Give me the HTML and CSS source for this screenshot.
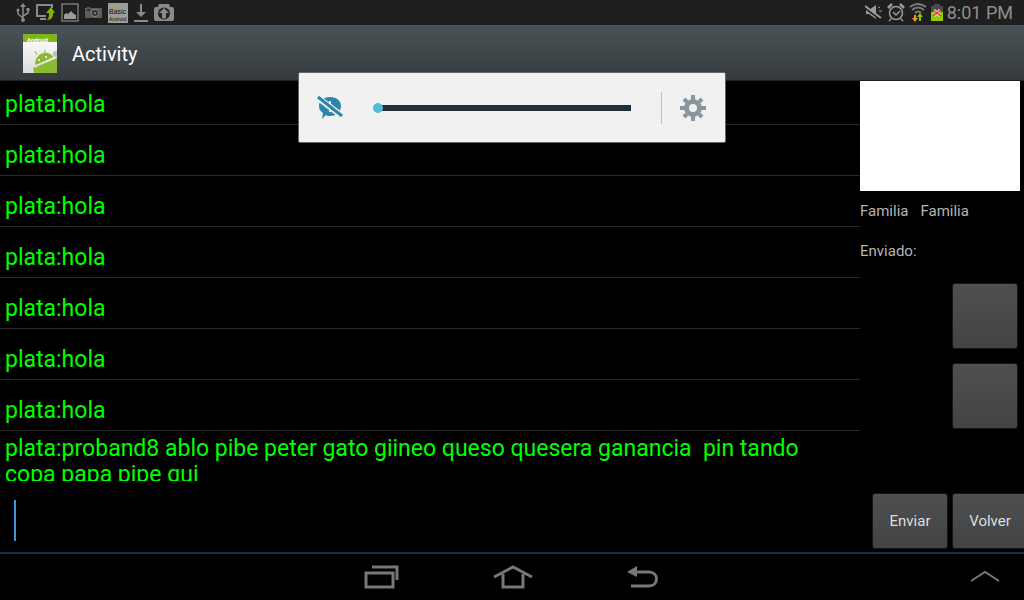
FILE: index.html
```html
<!DOCTYPE html>
<html lang="es">
  <head>
    <meta charset="UTF-8" />
    <meta name="viewport" content="width=device-width, initial-scale=1.0" />
    <title>Activity</title>
    <link rel="stylesheet" href="styles.css" />
  </head>
  <body>
    <!-- Barra de estado -->
    <div class="status-bar">
      <div class="status-icons">
        <svg width="14" height="20" viewBox="0 0 14 20" fill="none" stroke="#8a8a8a" stroke-width="1.5">
          <path d="M7 3v14M2 8v3l5 4M12 7v3l-5 3" />
          <path d="M7 0l3 4H4z" fill="#8a8a8a" stroke="none" />
          <circle cx="7" cy="17" r="2" fill="#8a8a8a" stroke="none" />
          <circle cx="2" cy="7" r="1.5" fill="#8a8a8a" stroke="none" />
          <path d="M10.5 5h3v3h-3z" fill="#8a8a8a" stroke="none" />
        </svg>
        <svg width="19" height="20" viewBox="0 0 19 20" fill="none">
          <path d="M16 5V2H1v11h9" stroke="#8a8a8a" stroke-width="2" />
          <path d="M4 16h6" stroke="#8a8a8a" stroke-width="2" />
          <path d="M15 4l4 6h-2c0 5-2 7-6 7 2-2 2-4 2-7h-3z" fill="#84b010" />
        </svg>
        <svg width="18" height="20" viewBox="0 0 18 20">
          <path d="M1 1h16v17H1z" fill="none" stroke="#777" stroke-width="1.5" />
          <path d="M3 16v-4l2-2 2 1 3-3 3 3 2 1v4z" fill="#9a9a9a" />
        </svg>
        <svg width="17" height="20" viewBox="0 0 17 20">
          <path d="M0 5h17v10H0zM2 4h3v1H2z" fill="#5c5c5c" />
          <circle cx="10" cy="10" r="3.5" fill="#222" stroke="#8d8d8d" />
          <circle cx="10" cy="10" r="1.5" fill="#777" />
          <path d="M2 6h3v2H2z" fill="#333" />
        </svg>
        <svg width="20" height="20" viewBox="0 0 20 20">
          <path d="M0 0h20v20H0z" fill="#9c9c9c" />
          <path d="M5 0v5h7M5 12v7" fill="none" stroke="#8bac4e" />
          <text class="b4a-text" x="1" y="11" font-size="7">Basic</text>
          <text class="b4a-text" x="1" y="18" font-size="5">Android</text>
        </svg>
        <svg width="14" height="20" viewBox="0 0 14 20" fill="#8a8a8a">
          <path d="M6 1h2v8h4l-5 5-5-5h4zM0 17h14v2H0z" />
        </svg>
        <svg width="20" height="20" viewBox="0 0 20 20" fill="#8a8a8a">
          <path d="M5 1h10l1 3h2q2 0 2 2v10q0 2-2 2H2q-2 0-2-2V6q0-2 2-2h2z" />
          <circle cx="10" cy="10.5" r="6" fill="#222" />
          <path d="M10 5l5 5h-3v5q-2 1-4 0v-5H5z" />
        </svg>
      </div>
      <div class="status-icons status-right">
        <svg width="18" height="20" viewBox="0 0 18 20">
          <path d="M1 7h3l7-5v14l-7-5H1z" fill="#9a9a9a" />
          <path d="M0 5l16 12" stroke="#1f1f1f" stroke-width="2" />
          <path d="M0 3l16 12" stroke="#9a9a9a" stroke-width="2" />
          <path d="M13 5l2-1M14 8h3" stroke="#9a9a9a" />
        </svg>
        <svg width="18" height="20" viewBox="0 0 18 20" fill="none" stroke="#9a9a9a" stroke-width="1.5">
          <circle cx="9" cy="10" r="6.5" />
          <path d="M6 9l3 3 4-4M4 16l-2 2M14 16l2 2" />
          <path d="M1 5l4-4M17 5l-4-4" stroke-width="2.5" />
        </svg>
        <svg width="18" height="20" viewBox="0 0 18 20" fill="none">
          <path d="M1 4q8-6 16 0M3 7q6-5 12 0M6 10q3-3 6 0" stroke="#7a7a7a" stroke-width="2" />
          <path d="M5 12h2v3h2l-3 4-3-4h2z" fill="#f59331" />
          <path d="M10 18h2v-4h2l-3-4-3 4h2z" fill="#86c50b" />
        </svg>
        <svg width="12" height="20" viewBox="0 0 12 20">
          <path d="M3 1h6v2h3v6H0V3h3z" fill="#4a4a4a" />
          <path d="M0 9h12v9H0z" fill="#8fce00" />
          <path d="M3 7l6 6M9 7l-6 6" stroke="#ddd" stroke-width="3" />
          <path d="M2 7l8 6M10 7l-8 6" stroke="#e33a1c" stroke-width="1.5" />
        </svg>
        <time class="clock">8:01 PM</time>
      </div>
    </div>

    <header class="action-bar">
      <svg width="34" height="40" viewBox="0 0 34 40">
        <defs>
          <linearGradient id="hoja" x1="0" y1="0" x2="0" y2="1">
            <stop offset="0" stop-color="#fff" />
            <stop offset="1" stop-color="#dcdcdc" />
          </linearGradient>
          <clipPath id="borde"><path d="M0 0h34v39H0z" /></clipPath>
        </defs>
        <path d="M0 2q0-2 2-2h30q2 0 2 2v37H0z" fill="url(#hoja)" />
        <path d="M0 2q0-2 2-2h30q2 0 2 2v6H0z" fill="#7eb51c" />
        <text class="logo-text" x="4" y="8" font-size="6">Android</text>
        <g clip-path="url(#borde)">
          <circle cx="33" cy="20" r="3" fill="#bdbdbd" />
          <path d="M12.5 31c-1-6 3-11 8-12 4-1 8 1 10 4zM13 33l21-9v15H15z" fill="#8cb834" />
          <path d="M10 34q2-2 4 1l1 4h-4z" fill="#8cb834" />
          <path d="M14 21l-2-4M22 19v-3" stroke="#8cb834" />
          <circle cx="16" cy="26" r="1" fill="#fff" />
          <circle cx="23" cy="23" r="1" fill="#fff" />
        </g>
      </svg>
      <h1>Activity</h1>
    </header>

    <main>
      <ul class="messages">
        <li>plata:hola</li>
        <li>plata:hola</li>
        <li>plata:hola</li>
        <li>plata:hola</li>
        <li>plata:hola</li>
        <li>plata:hola</li>
        <li>plata:hola</li>
        <li class="long">plata:proband8 ablo pibe peter gato giineo queso quesera ganancia&nbsp; pin tando<br />copa papa pipe qui</li>
      </ul>
      <aside class="side">
        <div class="photo"></div>
        <p class="names"><span>Familia</span><span>Familia</span></p>
        <p>Enviado:</p>
        <div class="actions">
          <button class="btn square" type="button" aria-label="Acción 1"></button>
          <button class="btn square" type="button" aria-label="Acción 2"></button>
        </div>
      </aside>
    </main>

    <form class="composer">
      <span class="caret"></span>
      <input type="text" aria-label="Mensaje" />
      <button class="btn" type="button">Enviar</button>
      <button class="btn" type="button">Volver</button>
    </form>

    <!-- Barra de navegación -->
    <nav class="nav-bar">
      <div class="nav-main">
        <button type="button" aria-label="Recientes">
          <svg width="40" height="26" viewBox="0 0 40 26" fill="none" stroke="#777" stroke-width="3">
            <path d="M3 9h27v14H3zM9 3h25v13" />
          </svg>
        </button>
        <button type="button" aria-label="Inicio">
          <svg width="40" height="26" viewBox="0 0 40 26" fill="none" stroke="#777" stroke-width="3">
            <path d="M1 13L20 3l19 10M10 10v13h20V10" />
          </svg>
        </button>
        <button type="button" aria-label="Atrás">
          <svg width="40" height="26" viewBox="0 0 40 26" fill="none" stroke="#777" stroke-width="3">
            <path d="M14 8h12c10 0 10 14 0 14H8" />
            <path d="M4 8l10-6v11z" fill="#777" stroke="none" />
          </svg>
        </button>
      </div>
      <button type="button" aria-label="Mostrar">
        <svg width="30" height="14" viewBox="0 0 30 14" fill="none" stroke="#777" stroke-width="2">
          <path d="M1 11l14-9 14 9" />
        </svg>
      </button>
    </nav>

    <!-- Panel de volumen -->
    <div class="volume">
      <svg width="26" height="26" viewBox="0 0 26 26">
        <path d="M13 2c7 0 11 4 11 9s-4 10-11 10c-2 0-3 0-4-1l-4 4 1-6c-3-2-4-4-4-7 0-5 4-9 11-9z" fill="#2c86ab" />
        <path d="M12 6h2v6h-2zM12 14h2v3h-2z" fill="#f1f1f1" />
        <path d="M0 2l25 19" stroke="#f1f1f1" stroke-width="6" />
        <path d="M1 2l24 19" stroke="#2c86ab" stroke-width="3" />
      </svg>
      <input type="range" min="0" max="15" value="0" aria-label="Volumen" />
      <button type="button" aria-label="Ajustes">
        <svg width="26" height="26" viewBox="0 0 26 26" fill="none" stroke="#8b959c">
          <circle cx="13" cy="13" r="6.5" stroke-width="5" />
          <path d="M13 0v5M13 21v5M0 13h5M21 13h5M4 4l3 3M19 19l3 3M22 4l-3 3M7 19l-3 3" stroke-width="4" />
        </svg>
      </button>
    </div>
  </body>
</html>
```
FILE: styles.css
```css
:root {
  --verde: #00ff00;
  --gris: #b5b5b5;
  --panel: #f1f1f1;
}

* {
  margin: 0;
  padding: 0;
  box-sizing: border-box;
}

body {
  position: relative;
  display: flex;
  flex-direction: column;
  height: 100vh;
  overflow: hidden;
  background-color: #000;
  color: var(--gris);
  font-family: Roboto, sans-serif;
  font-size: 15px;
}

svg {
  display: block;
  flex-shrink: 0;
}

button {
  border: none;
  background: none;
  font-family: inherit;
}

/* Barra de estado */
.status-bar {
  display: flex;
  justify-content: space-between;
  align-items: center;
  height: 25px;
  padding: 0 11px 0 16px;
  background-color: #1f1f1f;
}

.status-icons {
  display: flex;
  align-items: center;
  gap: 6px;
}

.status-right {
  gap: 4px;
}

.clock {
  color: #8f8f8f;
  font-size: 18px;
  line-height: 24px;
}

.b4a-text {
  fill: #111;
  font-family: "Liberation Sans", sans-serif;
}

/* Cabecera */
.action-bar {
  display: flex;
  align-items: center;
  gap: 15px;
  height: 56px;
  padding: 2px 0 0 23px;
  background: linear-gradient(#4a5356, #353a3e);
  border-bottom: 1px solid #1d2022;
}

.action-bar h1 {
  color: #fff;
  font-size: 20px;
  font-weight: 400;
}

.logo-text {
  fill: #fff;
  font-weight: 700;
}

/* Lista de mensajes */
main {
  display: flex;
  flex: 1;
  min-height: 0;
}

.messages {
  flex: 1;
  overflow: hidden;
  list-style: none;
  color: var(--verde);
  font-size: 23px;
  line-height: 26px;
}

.messages li {
  padding: 18px 5px 6px;
  border-bottom: 1px solid #2a2a2a;
}

.messages li:first-child {
  padding-top: 11px;
}

.messages .long {
  padding: 5px 5px 0;
}

.side {
  width: 164px;
  line-height: 20px;
}

.side p {
  margin-bottom: 20px;
}

.photo {
  height: 110px;
  margin: 0 4px 10px 0;
  background-color: #fff;
}

.names {
  display: flex;
  gap: 12px;
}

.actions {
  display: flex;
  flex-direction: column;
  align-items: flex-end;
  gap: 16px;
  padding: 3px 7px 0 0;
}

.btn {
  flex-shrink: 0;
  width: 74px;
  height: 54px;
  background: linear-gradient(#4e4f51, #424345);
  border-radius: 2px;
  box-shadow: 0 0 0 1px #151617;
  color: #dedede;
  font-size: 15px;
}

.square {
  width: 64px;
  height: 64px;
}

/* Caja de texto */
.composer {
  display: flex;
  align-items: center;
  gap: 6px;
  height: 71px;
  padding: 8px 0 0 14px;
  margin-right: -3px;
}

.caret {
  width: 2px;
  height: 41px;
  background-color: #4394d8;
}

.composer input {
  flex: 1;
  min-width: 0;
  height: 50px;
  border: none;
  outline: none;
  background: none;
  color: #fff;
  font-size: 23px;
}

/* Barra de navegación */
.nav-bar {
  display: flex;
  justify-content: space-between;
  align-items: center;
  height: 48px;
  padding: 0 24px;
  border-top: 2px solid #0b3245;
}

.nav-main {
  display: flex;
  flex: 1;
  justify-content: center;
  gap: 90px;
  padding-left: 31px;
}

/* Panel de volumen */
.volume {
  position: absolute;
  top: 72px;
  left: 50%;
  display: flex;
  align-items: center;
  width: 428px;
  height: 71px;
  padding: 0 3px 0 18px;
  transform: translateX(-50%);
  background-color: var(--panel);
  border: 1px solid #666;
  border-radius: 2px;
}

.volume input {
  flex: 1;
  min-width: 0;
  height: 20px;
  margin: 0 30px;
  appearance: none;
  background: linear-gradient(#212f38, #212f38) 4px center / 100% 6px no-repeat;
}

.volume input::-webkit-slider-thumb {
  appearance: none;
  width: 10px;
  height: 10px;
  border-radius: 50%;
  background-color: #50bcd8;
}

.volume button {
  padding: 3px 16px 3px 18px;
  border-left: 1px solid #bfc2c4;
}
```
